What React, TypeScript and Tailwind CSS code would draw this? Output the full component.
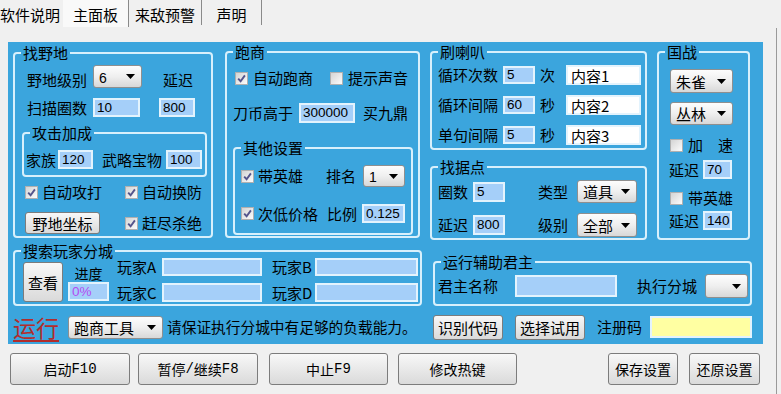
import React from "react";

const num = "font-['Liberation_Sans',sans-serif]";

function Arrow() {
  return (
    <svg width="9" height="5" viewBox="0 0 9 5" className="shrink-0">
      <path d="M0 0H9L4.5 5Z" fill="#000" />
    </svg>
  );
}

function Select({ children, className = "" }: { children?: React.ReactNode; className?: string }) {
  return (
    <div
      className={`flex shrink-0 items-center justify-between rounded-[3px] border border-[#8f8f8f] bg-gradient-to-b from-[#fdfdfd] via-[#efefef] to-[#d8d8d8] pl-[5px] pr-[6px] text-[15px] leading-none ${className}`}
    >
      <span>{children}</span>
      <Arrow />
    </div>
  );
}

function Check({ checked = false }: { checked?: boolean }) {
  return (
    <span className="flex h-[13px] w-[13px] shrink-0 items-center justify-center border border-[#b0b0b0] bg-gradient-to-br from-[#d4d4d4] to-[#fcfcfc]">
      {checked && (
        <svg width="9" height="9" viewBox="0 0 9 9">
          <path d="M1.2 4.6L3.6 7.2L7.9 1.4" stroke="#55558c" strokeWidth="1.9" fill="none" />
        </svg>
      )}
    </span>
  );
}

function Field({
  children,
  className = "",
  white = false,
  yellow = false,
  cjk = false,
}: {
  children?: React.ReactNode;
  className?: string;
  white?: boolean;
  yellow?: boolean;
  cjk?: boolean;
}) {
  const bg = white ? "bg-white" : yellow ? "bg-[#ffffa2]" : "bg-[#a5cff9]";
  return (
    <div
      className={`flex shrink-0 items-center border-2 border-[#e3f3fd] pl-[2px] leading-none ${bg} ${
        cjk ? "text-[15px]" : `${num} text-[13.5px]`
      } ${className}`}
    >
      {children}
    </div>
  );
}

function Btn({ children, className = "" }: { children?: React.ReactNode; className?: string }) {
  return (
    <div
      className={`flex shrink-0 items-center justify-center rounded-[3px] border border-[#7c7c7c] bg-gradient-to-b from-[#f8f8f8] to-[#dadada] leading-none ${className}`}
    >
      {children}
    </div>
  );
}

function Group({
  title,
  className = "",
  legendClass = "leading-[20px]",
  children,
}: {
  title: string;
  className?: string;
  legendClass?: string;
  children?: React.ReactNode;
}) {
  return (
    <fieldset className={`shrink-0 rounded-[4px] border-2 border-[#d8f0fc] ${className}`}>
      <legend className={`ml-[6px] px-[2px] text-[15px] ${legendClass}`}>{title}</legend>
      {children}
    </fieldset>
  );
}

function L({ children, className = "" }: { children?: React.ReactNode; className?: string }) {
  return <span className={`shrink-0 whitespace-nowrap text-[15px] leading-[20px] ${className}`}>{children}</span>;
}

function Mono({ children }: { children?: React.ReactNode }) {
  return <span className="font-['Liberation_Mono',monospace] text-[14px]">{children}</span>;
}

export default function App() {
  return (
    <div className="relative h-[394px] w-[781px] overflow-hidden bg-[#f0f0f0] font-['Noto_Sans_CJK_SC','Noto_Sans_CJK_JP',sans-serif] text-black">
      {/* Tabs */}
      <div className="flex h-[28px] text-[15px] leading-[20px]">
        <div className="h-[25px] w-[63px] pt-[5px]">软件说明</div>
        <div className="h-[27px] w-[66px] border-r border-[#8a8a8a] bg-[#f9f9f9] pt-[5px] text-center">主面板</div>
        <div className="h-[25px] w-[73px] border-r border-[#8a8a8a] pt-[5px] text-center">来敌预警</div>
        <div className="h-[25px] w-[60px] border-r border-[#8a8a8a] pt-[5px] text-center">声明</div>
      </div>

      {/* Tab page */}
      <div className="h-[366px] w-[777px] border-r border-[#9a9a9a] pl-[8px] pt-[14px]">
        <div className="h-[302px] w-[755px] bg-[#3ba5dd] pl-[5px]">
          {/* Top row */}
          <div className="flex items-start">
            {/* 找野地 */}
            <Group title="找野地" className="mt-[1px] h-[195px] w-[200px]">
              <div className="mt-[2px] flex h-[23px] items-center">
                <L className="ml-[12px] mt-[6px] w-[60px]">野地级别</L>
                <Select className="ml-[6px] h-[23px] w-[49px]">
                  <span className={`${num} text-[14px]`}>6</span>
                </Select>
                <L className="ml-[21px] mt-[6px]">延迟</L>
              </div>
              <div className="mt-[10px] flex h-[19px] items-center">
                <L className="ml-[12px] w-[60px]">扫描圈数</L>
                <Field className="ml-[6px] h-[19px] w-[47px]">10</Field>
                <Field className="ml-[19px] h-[19px] w-[36px]">800</Field>
              </div>
              <Group title="攻击加成" className="ml-[7px] mt-[6px] h-[54px] w-[185px]">
                <div className="mt-[7px] flex h-[19px] items-center">
                  <L className="ml-[2px] w-[30px]">家族</L>
                  <Field className="ml-[2px] h-[19px] w-[35px]">120</Field>
                  <L className="ml-[9px] w-[60px]">武略宝物</L>
                  <Field className="ml-[4px] h-[19px] w-[36px]">100</Field>
                </div>
              </Group>
              <div className="mt-[5px] flex h-[20px] items-center">
                <span className="ml-[10px]">
                  <Check checked />
                </span>
                <L className="ml-[4px] w-[60px]">自动攻打</L>
                <span className="ml-[23px]">
                  <Check checked />
                </span>
                <L className="ml-[4px]">自动换防</L>
              </div>
              <div className="mt-[10px] flex h-[22px] items-center">
                <Btn className="ml-[10px] h-[22px] w-[75px] text-[15px]">野地坐标</Btn>
                <span className="ml-[25px]">
                  <Check checked />
                </span>
                <L className="ml-[4px]">赶尽杀绝</L>
              </div>
            </Group>

            {/* 跑商 */}
            <Group title="跑商" className="ml-[12px] h-[196px] w-[195px]">
              <div className="mt-[6px] flex h-[20px] items-center">
                <span className="ml-[8px]">
                  <Check checked />
                </span>
                <L className="ml-[5px] w-[60px]">自动跑商</L>
                <span className="ml-[17px]">
                  <Check />
                </span>
                <L className="ml-[5px]">提示声音</L>
              </div>
              <div className="mt-[15px] flex h-[20px] items-center">
                <L className="ml-[6px] w-[60px]">刀币高于</L>
                <Field className="ml-[6px] h-[20px] w-[56px]">300000</Field>
                <L className="ml-[8px]">买九鼎</L>
              </div>
              <Group title="其他设置" className="ml-[6px] mt-[15px] h-[97px] w-[180px]">
                <div className="mt-[7px] flex h-[22px] items-center">
                  <span className="ml-[6px]">
                    <Check checked />
                  </span>
                  <L className="ml-[4px] w-[45px]">带英雄</L>
                  <L className="ml-[23px] w-[30px]">排名</L>
                  <Select className="ml-[7px] h-[22px] w-[42px]">
                    <span className={`${num} text-[14px]`}>1</span>
                  </Select>
                </div>
                <div className="mt-[17px] flex h-[19px] items-center">
                  <span className="ml-[6px]">
                    <Check checked />
                  </span>
                  <L className="ml-[4px] w-[60px]">次低价格</L>
                  <L className="ml-[9px] w-[30px]">比例</L>
                  <Field className="ml-[5px] h-[19px] w-[43px]">0.125</Field>
                </div>
              </Group>
            </Group>

            {/* 刷喇叭 + 找据点 */}
            <div className="ml-[10px] flex w-[217px] flex-col">
              <Group title="刷喇叭" className="h-[108px] w-[217px]">
                {[
                  ["循环次数", "5", "次", "内容1", "mt-[3px]"],
                  ["循环间隔", "60", "秒", "内容2", "mt-[10px]"],
                  ["单句间隔", "5", "秒", "内容3", "mt-[10px]"],
                ].map(([a, b, c, d, m]) => (
                  <div key={a + d} className={`flex h-[20px] items-center ${m}`}>
                    <L className="ml-[6px] w-[60px]">{a}</L>
                    <Field className="ml-[5px] h-[18px] w-[32px]">{b}</Field>
                    <L className="ml-[5px] w-[15px]">{c}</L>
                    <Field white cjk className="ml-[11px] h-[20px] w-[75px] pl-[3px]">
                      {d}
                    </Field>
                  </div>
                ))}
              </Group>
              <Group title="找据点" className="mt-[7px] h-[83px] w-[217px]">
                <div className="mt-[3px] flex h-[23px] items-center">
                  <L className="ml-[6px] w-[30px]">圈数</L>
                  <Field className="ml-[5px] h-[20px] w-[32px]">5</Field>
                  <L className="ml-[33px] w-[30px]">类型</L>
                  <Select className="ml-[9px] h-[23px] w-[60px]">道具</Select>
                </div>
                <div className="mt-[10px] flex h-[24px] items-center">
                  <L className="ml-[6px] w-[30px]">延迟</L>
                  <Field className="ml-[5px] h-[20px] w-[32px]">800</Field>
                  <L className="ml-[33px] w-[30px]">级别</L>
                  <Select className="ml-[9px] h-[24px] w-[60px]">全部</Select>
                </div>
              </Group>
            </div>

            {/* 国战 */}
            <Group title="国战" className="ml-[10px] h-[198px] w-[93px]">
              <Select className="ml-[11px] mt-[7px] h-[24px] w-[63px]">朱雀</Select>
              <Select className="ml-[11px] mt-[9px] h-[23px] w-[63px]">丛林</Select>
              <div className="mt-[10px] flex h-[20px] items-center">
                <span className="ml-[11px]">
                  <Check />
                </span>
                <L className="ml-[5px]">加</L>
                <L className="ml-[15px]">速</L>
              </div>
              <div className="mt-[5px] flex h-[19px] items-center">
                <L className="ml-[10px] w-[30px]">延迟</L>
                <Field className="ml-[4px] h-[19px] w-[29px]">70</Field>
              </div>
              <div className="mt-[9px] flex h-[20px] items-center">
                <span className="ml-[11px]">
                  <Check />
                </span>
                <L className="ml-[5px]">带英雄</L>
              </div>
              <div className="mt-[3px] flex h-[19px] items-center">
                <L className="ml-[10px] w-[30px]">延迟</L>
                <Field className="ml-[4px] h-[19px] w-[29px]">140</Field>
              </div>
            </Group>
          </div>

          {/* Second row */}
          <div className="mt-[3px] flex items-end">
            <Group title="搜索玩家分城" legendClass="leading-[16px]" className="h-[63px] w-[409px]">
              <div className="-mt-[1px] flex items-start">
                <Btn className="ml-[8px] mt-[4px] h-[40px] w-[40px] text-[15px]">查看</Btn>
                <div className="ml-[5px] flex w-[41px] flex-col items-center">
                  <span className="mt-[8px] whitespace-nowrap text-[14px] leading-[14px]">进度</span>
                  <Field className="mt-[2px] h-[19px] w-[41px] text-[#b44cf2]">0%</Field>
                </div>
                <div className="ml-[8px] flex flex-col">
                  <div className="flex h-[18px] items-center">
                    <L className="w-[40px]">玩家A</L>
                    <Field className="ml-[5px] h-[18px] w-[100px]" />
                    <L className="ml-[10px] w-[40px]">玩家B</L>
                    <Field className="ml-[3px] h-[18px] w-[103px]" />
                  </div>
                  <div className="mt-[7px] flex h-[19px] items-center">
                    <L className="w-[40px]">玩家C</L>
                    <Field className="ml-[5px] h-[19px] w-[100px]" />
                    <L className="ml-[10px] w-[40px]">玩家D</L>
                    <Field className="ml-[3px] h-[19px] w-[103px]" />
                  </div>
                </div>
              </div>
            </Group>
            <Group title="运行辅助君主" className="ml-[11px] h-[54px] w-[319px]">
              <div className="mt-[2px] flex h-[24px] items-center">
                <L className="ml-[3px] w-[60px]">君主名称</L>
                <Field className="ml-[17px] h-[22px] w-[102px]" />
                <L className="ml-[20px] w-[60px]">执行分城</L>
                <Select className="ml-[8px] h-[24px] w-[43px]" />
              </div>
            </Group>
          </div>

          {/* Third row */}
          <div className="mt-[8px] flex h-[26px] items-center">
            <span className="w-[47px] shrink-0 text-[23px] leading-[26px] text-[#b22c2c] underline decoration-2 underline-offset-[3px]">
              运行
            </span>
            <Select className="ml-[8px] h-[23px] w-[95px]">跑商工具</Select>
            <span className="ml-[4px] w-[251px] shrink-0 whitespace-nowrap text-[14.7px] leading-[20px]">
              请保证执行分城中有足够的负载能力。
            </span>
            <Btn className="ml-[15px] h-[25px] w-[70px] text-[15px]">识别代码</Btn>
            <Btn className="ml-[12px] h-[25px] w-[70px] text-[15px]">选择试用</Btn>
            <L className="ml-[12px] w-[45px]">注册码</L>
            <Field yellow className="ml-[8px] h-[22px] w-[102px]" />
          </div>
        </div>

        {/* Bottom buttons */}
        <div className="mt-[9px] flex h-[32px] pl-[2px] text-[14px]">
          <Btn className="h-[32px] w-[120px]">
            启动<Mono>F10</Mono>
          </Btn>
          <Btn className="ml-[8px] h-[32px] w-[120px]">
            暂停<Mono>/</Mono>继续<Mono>F8</Mono>
          </Btn>
          <Btn className="ml-[11px] h-[32px] w-[119px]">
            中止<Mono>F9</Mono>
          </Btn>
          <Btn className="ml-[10px] h-[32px] w-[119px]">修改热键</Btn>
          <Btn className="ml-[91px] h-[32px] w-[70px]">保存设置</Btn>
          <Btn className="ml-[11px] h-[32px] w-[71px]">还原设置</Btn>
        </div>
      </div>
    </div>
  );
}
